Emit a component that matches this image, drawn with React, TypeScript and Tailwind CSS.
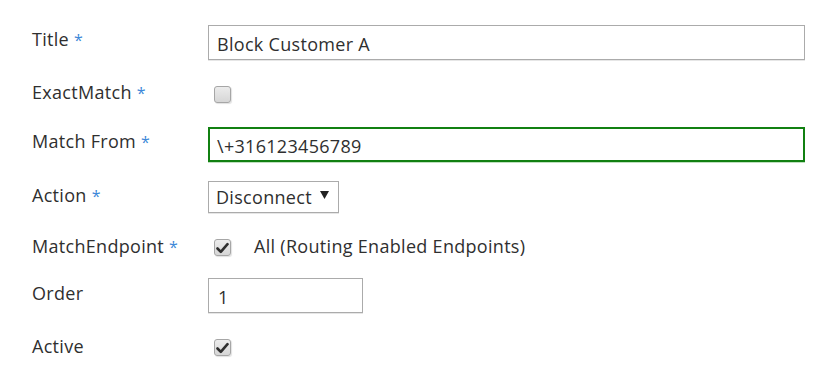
import React from "react";

const font = { fontFamily: '"Open Sans", "Noto Sans", sans-serif' };

function Star() {
  return <span className="text-[#3d88d8] ml-[5px] text-[16px] leading-[0]">*</span>;
}

function Check({ checked }: { checked: boolean }) {
  return (
    <div className="w-[17px] h-[17px] rounded-[3px] border border-[#a6a6a6] bg-gradient-to-b from-[#ececec] to-[#d6d6d6] shadow-[1px_1px_1px_rgba(0,0,0,0.12)] flex items-center justify-center">
      {checked && (
        <svg width="13" height="12" viewBox="0 0 13 12">
          <path d="M1.5 6.5 L4.8 9.8 L11.5 2.2" fill="none" stroke="#2e2e2e" strokeWidth="2.6" strokeLinecap="round" strokeLinejoin="round" />
        </svg>
      )}
    </div>
  );
}

export default function App() {
  return (
    <div className="w-[819px] h-[377px] bg-white text-[#2f2f2f] text-[18px] leading-[24px] tracking-[0.3px] overflow-hidden" style={font}>
      <div className="flex flex-col pl-[32px]">
        {/* Title */}
        <div className="flex mt-[25px]">
          <div className="w-[176px] pt-[2px]">Title<Star /></div>
          <div className="w-[597px] h-[35px] border border-[#ababab] shadow-[0_1px_0_#e6e6e6] pl-[8px] pt-[6px]">Block Customer A</div>
        </div>
        {/* ExactMatch */}
        <div className="flex mt-[20px]">
          <div className="w-[182px]">ExactMatch<Star /></div>
          <div className="pt-[6px]"><Check checked={false} /></div>
        </div>
        {/* Match From */}
        <div className="flex mt-[23px]">
          <div className="w-[176px] pt-[2px]">Match From<Star /></div>
          <div className="w-[597px] h-[35px] border-2 border-[#118011] shadow-[0_1px_0_#bfe0bf] pl-[7px] pt-[5px]">\+316123456789</div>
        </div>
        {/* Action */}
        <div className="flex mt-[19px]">
          <div className="w-[176px] pt-[2px]">Action<Star /></div>
          <div className="w-[131px] h-[32px] border border-[#ababab] shadow-[0_1px_0_#e6e6e6] pl-[7px] pt-[3px] flex">
            <span>Disconnect</span>
            <svg className="ml-[8px] mt-[6px]" width="9" height="9" viewBox="0 0 9 9">
              <path d="M0 0 L9 0 L4.5 8 Z" fill="#222" />
            </svg>
          </div>
        </div>
        {/* MatchEndpoint */}
        <div className="flex mt-[21px]">
          <div className="w-[182px]">MatchEndpoint<Star /></div>
          <div className="pt-[5px]"><Check checked={true} /></div>
          <div className="ml-[23px]">All (Routing Enabled Endpoints)</div>
        </div>
        {/* Order */}
        <div className="flex mt-[20px]">
          <div className="w-[176px] pt-[3px]">Order</div>
          <div className="w-[155px] h-[35px] border border-[#ababab] shadow-[0_1px_0_#e6e6e6] pl-[9px] pt-[6px]">1</div>
        </div>
        {/* Active */}
        <div className="flex mt-[21px]">
          <div className="w-[182px]">Active</div>
          <div className="pt-[5px]"><Check checked={true} /></div>
        </div>
      </div>
    </div>
  );
}
